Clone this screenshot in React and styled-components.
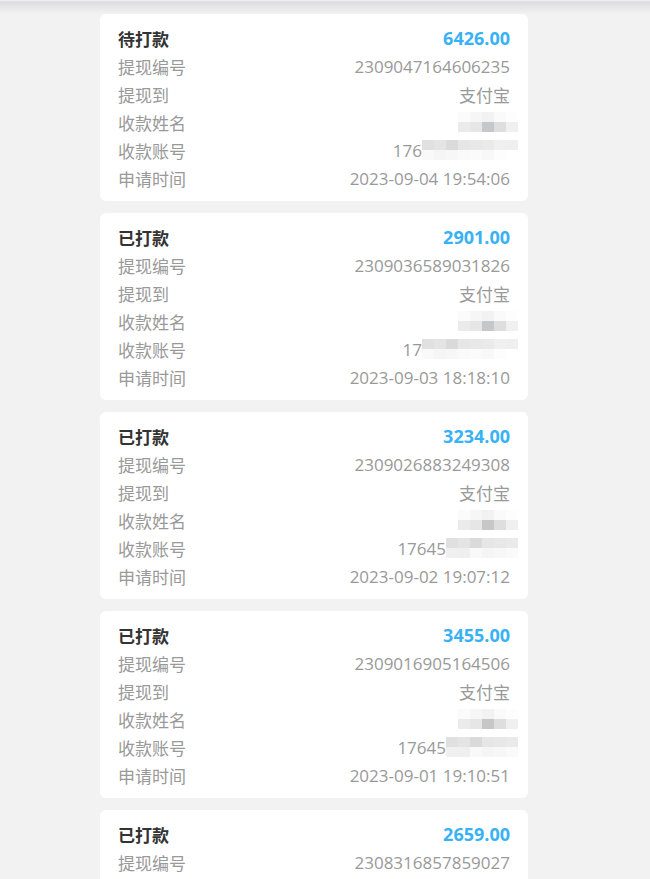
import styled, { createGlobalStyle } from "styled-components";

const GlobalStyle = createGlobalStyle`
  html, body {
    margin: 0;
    padding: 0;
    background: #f2f2f2;
  }
  body {
    font-family: "Open Sans", "Noto Sans CJK SC", sans-serif;
  }
`;

const Page = styled.div`
  width: 650px;
  min-height: 879px;
  background: #f2f2f2;
`;

const TopShade = styled.div`
  height: 14px;
  background: linear-gradient(#f4f4f4 0, #dcdcde 2px, #e6e6e8 7px, #f2f2f2 14px);
`;

const List = styled.div`
  display: flex;
  flex-direction: column;
  gap: 12px;
  width: 428px;
  margin-left: 100px;
`;

const Card = styled.div`
  background: #fff;
  border-radius: 6px;
  padding: 10px 18px 9px;
`;

const Row = styled.div`
  display: flex;
  justify-content: space-between;
  align-items: center;
  height: 28px;
  font-size: 17px;
  color: #999;
`;

const Status = styled.span`
  font-weight: bold;
  color: #333;
`;

const Amount = styled.span`
  font-weight: bold;
  font-size: 18px;
  color: #38b2f4;
`;

const Value = styled.span`
  display: flex;
  align-items: center;
  margin-right: ${(p) => (p.$over ? "-8px" : "0")};
`;

const Mosaic = styled.span`
  display: grid;
  grid-template-columns: repeat(${(p) => p.$cols}, 12px);
  grid-auto-rows: 10px;
  filter: blur(0.4px);
`;

const Tile = styled.span`
  background: ${(p) => p.$c};
`;

const nameShades = ["#fbfbfb", "#f6f6f6", "#f2f2f2", "#fafafa", "#fdfdfd", "#ebebeb", "#e6e6e6", "#c6c7c8", "#dedede", "#f0f0f0"];
const accShades = [
  "#e0e0e0", "#e4e4e4", "#dadada", "#e6e6e6", "#e8e8e8", "#eaeaea", "#f0f0f0", "#efeff1",
  "#f9f9f9", "#f5f5f5", "#f7f7f7", "#fafafa", "#fbfbfb", "#f8f8f8", "#fdfdfd", "#ffffff",
];

function Blur({ cols, shades }) {
  return (
    <Mosaic $cols={cols}>
      {shades.map((c, i) => (
        <Tile key={i} $c={c} />
      ))}
    </Mosaic>
  );
}

const records = [
  { status: "待打款", amount: "6426.00", no: "2309047164606235", acc: "176", time: "2023-09-04 19:54:06" },
  { status: "已打款", amount: "2901.00", no: "2309036589031826", acc: "17", time: "2023-09-03 18:18:10" },
  { status: "已打款", amount: "3234.00", no: "2309026883249308", acc: "17645", time: "2023-09-02 19:07:12" },
  { status: "已打款", amount: "3455.00", no: "2309016905164506", acc: "17645", time: "2023-09-01 19:10:51" },
  { status: "已打款", amount: "2659.00", no: "2308316857859027", acc: "17645", time: "2023-08-31 19:02:33" },
];

export default function App() {
  return (
    <Page>
      <GlobalStyle />
      <TopShade />
      <List>
        {records.map((r) => {
          const cols = r.acc.length > 3 ? 6 : 8;
          return (
            <Card key={r.no}>
              <Row>
                <Status>{r.status}</Status>
                <Amount>{r.amount}</Amount>
              </Row>
              <Row>
                <span>提现编号</span>
                <span>{r.no}</span>
              </Row>
              <Row>
                <span>提现到</span>
                <span>支付宝</span>
              </Row>
              <Row>
                <span>收款姓名</span>
                <Value $over>
                  <Blur cols={5} shades={nameShades} />
                </Value>
              </Row>
              <Row>
                <span>收款账号</span>
                <Value $over>
                  {r.acc}
                  <Blur cols={cols} shades={accShades.slice(0, 2 * cols)} />
                </Value>
              </Row>
              <Row>
                <span>申请时间</span>
                <span>{r.time}</span>
              </Row>
            </Card>
          );
        })}
      </List>
    </Page>
  );
}
